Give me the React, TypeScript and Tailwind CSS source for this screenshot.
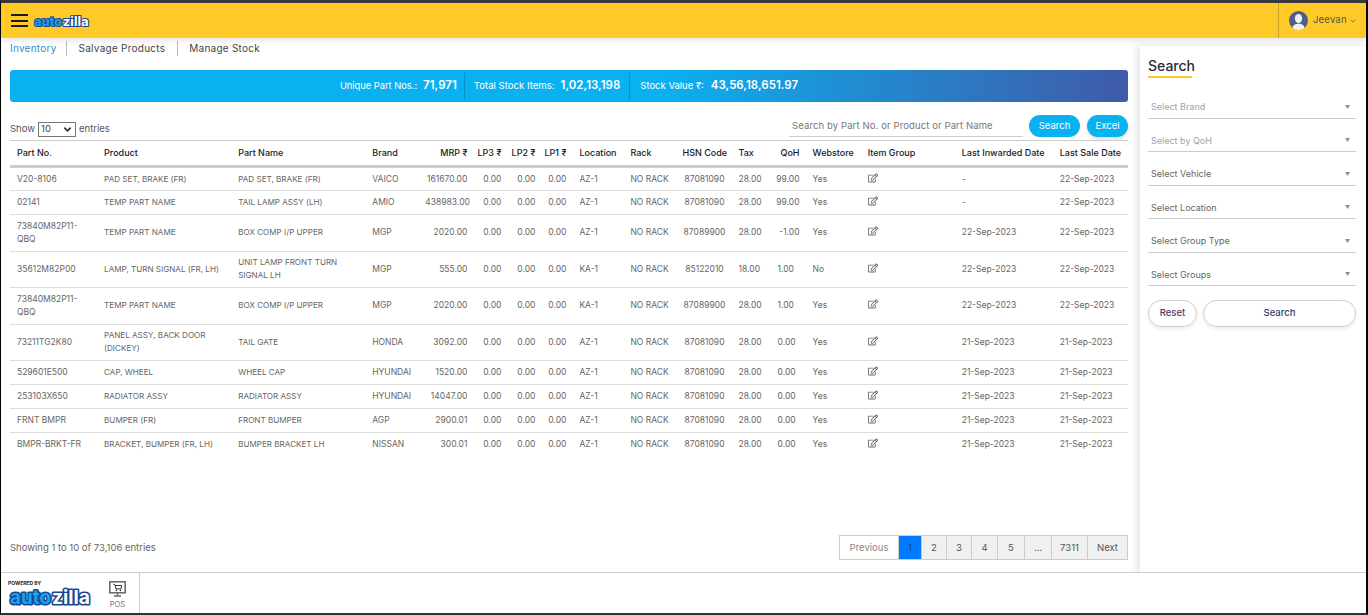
import { ChevronDown } from "lucide-react";
import { FaRegEdit } from "react-icons/fa";

const FONT = "font-['Inter','Liberation_Sans',sans-serif]";

type Col = { label: string; w: number; align?: string };

const COLS: Col[] = [
  { label: "Part No.", w: 87 },
  { label: "Product", w: 134 },
  { label: "Part Name", w: 134 },
  { label: "Brand", w: 60 },
  { label: "MRP ₹", w: 47, align: "pl-0 pr-[5px] text-right" },
  { label: "LP3 ₹", w: 34, align: "pl-0 pr-[5px] text-right" },
  { label: "LP2 ₹", w: 34, align: "pl-0 pr-[5px] text-right" },
  { label: "LP1 ₹", w: 32, align: "pl-0 pr-[6px] text-right" },
  { label: "Location", w: 51 },
  { label: "Rack", w: 52 },
  { label: "HSN Code", w: 56 },
  { label: "Tax", w: 39 },
  { label: "QoH", w: 35, align: "pl-0 pr-[6px] text-right" },
  { label: "Webstore", w: 55 },
  { label: "Item Group", w: 94 },
  { label: "Last Inwarded Date", w: 98 },
  { label: "Last Sale Date", w: 75 },
];

const ROWS = [
  ["V20-8106", "PAD SET, BRAKE (FR)", "PAD SET, BRAKE (FR)", "VAICO", "161670.00", "AZ-1", "87081090", "28.00", "99.00", "Yes", "-", "22-Sep-2023"],
  ["02141", "TEMP PART NAME", "TAIL LAMP ASSY (LH)", "AMIO", "438983.00", "AZ-1", "87081090", "28.00", "99.00", "Yes", "-", "22-Sep-2023"],
  ["73840M82P11-QBQ", "TEMP PART NAME", "BOX COMP I/P UPPER", "MGP", "2020.00", "AZ-1", "87089900", "28.00", "-1.00", "Yes", "22-Sep-2023", "22-Sep-2023"],
  ["35612M82P00", "LAMP, TURN SIGNAL (FR, LH)", "UNIT LAMP FRONT TURN SIGNAL LH", "MGP", "555.00", "KA-1", "85122010", "18.00", "1.00", "No", "22-Sep-2023", "22-Sep-2023"],
  ["73840M82P11-QBQ", "TEMP PART NAME", "BOX COMP I/P UPPER", "MGP", "2020.00", "KA-1", "87089900", "28.00", "1.00", "Yes", "22-Sep-2023", "22-Sep-2023"],
  ["73211TG2K80", "PANEL ASSY, BACK DOOR (DICKEY)", "TAIL GATE", "HONDA", "3092.00", "AZ-1", "87081090", "28.00", "0.00", "Yes", "21-Sep-2023", "21-Sep-2023"],
  ["529601E500", "CAP, WHEEL", "WHEEL CAP", "HYUNDAI", "1520.00", "AZ-1", "87081090", "28.00", "0.00", "Yes", "21-Sep-2023", "21-Sep-2023"],
  ["253103X650", "RADIATOR ASSY", "RADIATOR ASSY", "HYUNDAI", "14047.00", "AZ-1", "87081090", "28.00", "0.00", "Yes", "21-Sep-2023", "21-Sep-2023"],
  ["FRNT BMPR", "BUMPER (FR)", "FRONT BUMPER", "AGP", "2900.01", "AZ-1", "87081090", "28.00", "0.00", "Yes", "21-Sep-2023", "21-Sep-2023"],
  ["BMPR-BRKT-FR", "BRACKET, BUMPER (FR, LH)", "BUMPER BRACKET LH", "NISSAN", "300.01", "AZ-1", "87081090", "28.00", "0.00", "Yes", "21-Sep-2023", "21-Sep-2023"],
];

const FILTERS = [
  { label: "Select Brand", tone: "text-[#a3a3a3]" },
  { label: "Select by QoH", tone: "text-[#a3a3a3]" },
  { label: "Select Vehicle", tone: "text-[#666]" },
  { label: "Select Location", tone: "text-[#666]" },
  { label: "Select Group Type", tone: "text-[#666]" },
  { label: "Select Groups", tone: "text-[#666]" },
];

const PAGES = [
  { label: "Previous", w: "w-[58px]", cls: "bg-white text-[#888]" },
  { label: "1", w: "w-[23px]", cls: "bg-[#007bff] text-[#0b4f9c]" },
  { label: "2", w: "w-[25px]", cls: "bg-[#f0f0f0] text-[#555]" },
  { label: "3", w: "w-[25px]", cls: "bg-[#f0f0f0] text-[#555]" },
  { label: "4", w: "w-[26px]", cls: "bg-[#f0f0f0] text-[#555]" },
  { label: "5", w: "w-[27px]", cls: "bg-[#f0f0f0] text-[#555]" },
  { label: "...", w: "w-[27px]", cls: "bg-[#f0f0f0] text-[#555]" },
  { label: "7311", w: "w-[36px]", cls: "bg-[#f0f0f0] text-[#555]" },
  { label: "Next", w: "w-[40px]", cls: "bg-[#f0f0f0] text-[#555]" },
];

function Logo({ width, height }: { width: number; height: number }) {
  const shared = {
    y: 17.5,
    fontFamily: "Inter, sans-serif",
    fontWeight: 700,
    fontSize: 19,
    lengthAdjust: "spacingAndGlyphs" as const,
    stroke: "#1a4590",
    strokeWidth: 3.2,
    strokeLinejoin: "round" as const,
    style: { paintOrder: "stroke" },
  };
  return (
    <svg width={width} height={height} viewBox="0 0 84 22">
      <text {...shared} x="2" textLength="41" fill="#14a5ea">auto</text>
      <text {...shared} x="44" textLength="38" fill="#ffffff">zilla</text>
    </svg>
  );
}

function Avatar() {
  return (
    <svg width="19" height="19" viewBox="0 0 19 19">
      <circle cx="9.5" cy="9.5" r="9.5" fill="#4d5f86" />
      <ellipse cx="9.5" cy="7.6" rx="3.6" ry="4.6" fill="#f2f2f2" />
      <path d="M3.4 17c.6-3.2 3.2-4.2 6.1-4.2s5.5 1 6.1 4.2A9.5 9.5 0 0 1 9.5 19a9.5 9.5 0 0 1-6.1-2z" fill="#f2f2f2" />
    </svg>
  );
}

function PosIcon() {
  return (
    <svg width="17" height="16" viewBox="0 0 17 16" fill="none">
      <rect x="0.8" y="0.8" width="15.4" height="11" stroke="#666" strokeWidth="1.5" />
      <path d="M4.5 3.3h1.3l1.100 4.600h5l.9-3.400H6.200" stroke="#333" strokeWidth="1" />
      <circle cx="7.4" cy="9.4" r=".8" fill="#333" />
      <circle cx="11.5" cy="9.4" r=".8" fill="#333" />
      <path d="M8.5 12v2M5 15h7" stroke="#666" strokeWidth="1.5" />
    </svg>
  );
}

function Header() {
  return (
    <header className="h-[35px] shrink-0 bg-[#ffca28] flex items-center justify-between shadow-[0_2px_6px_rgba(0,0,0,0.12)] relative z-10">
      <div className="flex items-center pl-[10px]">
        <div className="w-[17px] flex flex-col gap-[3.5px]">
          <span className="h-[2px] bg-[#1c1c1c]" />
          <span className="h-[2px] bg-[#1c1c1c]" />
          <span className="h-[2px] bg-[#1c1c1c]" />
        </div>
        <div className="ml-[5px] mt-[1px]">
          <Logo width={57} height={15} />
        </div>
      </div>
      <div className="h-full w-[88px] border-l border-[#c9a227] flex items-center pl-[10px] gap-[5px]">
        <Avatar />
        <span className="text-[9.5px] tracking-[0.02em] text-[#555]">Jeevan</span>
        <ChevronDown className="w-[8px] h-[8px] -ml-[3px] text-[#555]" />
      </div>
    </header>
  );
}

function Tabs() {
  return (
    <nav className="flex items-center h-[14px] text-[10px] text-[#444] tracking-[0.025em]">
      <span className="text-[#2f8fc4] pr-[9px] border-r border-[#bbb]">Inventory</span>
      <span className="px-[12px] border-r border-[#bbb]">Salvage Products</span>
      <span className="pl-[11px]">Manage Stock</span>
    </nav>
  );
}

function Stats() {
  return (
    <div className="mt-[15px] h-[32px] rounded-[3px] bg-[linear-gradient(90deg,#0ab1f0_0%,#0ab1f0_58%,#3f5aa8_100%)] flex items-center justify-center text-white">
      <div className="flex items-center h-[27px] pr-[7px] border-r border-[#0a8fc4] gap-[6px]">
        <span className="text-[9.3px]">Unique Part Nos.:</span>
        <span className="text-[11.5px] font-semibold">71,971</span>
      </div>
      <div className="flex items-center h-[27px] px-[9px] border-r border-[#0a8fc4] gap-[6px]">
        <span className="text-[9.6px]">Total Stock Items:</span>
        <span className="text-[11.5px] font-semibold">1,02,13,198</span>
      </div>
      <div className="flex items-center h-[27px] pl-[10px] gap-[7px]">
        <span className="text-[9.5px]">Stock Value ₹:</span>
        <span className="text-[11.5px] font-semibold">43,56,18,651.97</span>
      </div>
    </div>
  );
}

function Controls() {
  return (
    <div className="mt-[10px] h-[25px] flex items-end justify-between">
      <div className="flex items-center gap-[3px] text-[9.5px] text-[#555]">
        Show
        <span className="w-[38px] h-[15px] border border-[#767676] flex items-center justify-between px-[2px] text-[#444]">
          10
          <ChevronDown className="w-[11px] h-[11px] text-[#333]" strokeWidth={3.5} />
        </span>
        entries
      </div>
      <div className="flex items-end">
        <div className="w-[234px] h-[21px] border-b border-[#ccc] pl-[3px] text-[9.5px] tracking-[0.012em] text-[#777] flex items-center">
          Search by Part No. or Product or Part Name
        </div>
        <button className="ml-[6px] w-[51px] h-[22px] rounded-full bg-[#0ab1f0] text-white text-[9.5px]">Search</button>
        <button className="ml-[7px] w-[41px] h-[22px] rounded-full bg-[#0ab1f0] text-white text-[9.5px] shadow-[0_2px_4px_rgba(0,0,0,0.15)]">Excel</button>
      </div>
    </div>
  );
}

function Table() {
  return (
    <table className="mt-[3px] w-[1118px] table-fixed border-collapse">
      <colgroup>
        {COLS.map((c) => (
          <col key={c.label} style={{ width: c.w }} />
        ))}
      </colgroup>
      <thead>
        <tr className="h-[26px] border-t border-b-[3px] border-t-[#ccc] border-b-[#ccc]">
          {COLS.map((c) => (
            <th key={c.label} className={`text-[9px] font-medium text-[#1a1a1a] whitespace-nowrap ${c.align ?? "pl-[7px] pr-[5px] text-left"}`}>
              {c.label}
            </th>
          ))}
        </tr>
      </thead>
      <tbody>
        {ROWS.map((r, i) => {
          const [part, product, name, brand, mrp, loc, hsn, tax, qoh, web, inward, sale] = r;
          const tall = part.includes("-QBQ") || product.length > 25 || name.length > 25;
          const td = "pl-[7px] pr-[5px] leading-[13px]";
          const num = "pr-[5px] leading-[13px] text-right whitespace-nowrap";
          return (
            <tr key={i} className={`${tall ? "h-[36.5px]" : "h-[24px]"} ${i < ROWS.length - 1 ? "border-b border-[#ddd]" : ""} text-[8.5px] text-[#666]`}>
              <td className={td}>{part}</td>
              <td className={`${td} text-[8.1px]`}>{product}</td>
              <td className={`${td} text-[8.1px]`}>{name}</td>
              <td className={td}>{brand}</td>
              <td className={num}>{mrp}</td>
              <td className={num}>0.00</td>
              <td className={num}>0.00</td>
              <td className={`${num} pr-[6px]`}>0.00</td>
              <td className={td}>{loc}</td>
              <td className={`${td} whitespace-nowrap`}>NO RACK</td>
              <td className={`${td} text-center`}>{hsn}</td>
              <td className={td}>{tax}</td>
              <td className={qoh.length > 4 ? `${num} pr-[6px]` : td}>{qoh}</td>
              <td className={td}>{web}</td>
              <td className={td}>
                <FaRegEdit className="w-[10px] h-[10px] -mt-[3px] text-[#666]" />
              </td>
              <td className={td}>{inward}</td>
              <td className={`${td} whitespace-nowrap`}>{sale}</td>
            </tr>
          );
        })}
      </tbody>
    </table>
  );
}

function TableFooter() {
  return (
    <div className="mt-auto mb-[12px] flex items-center justify-between">
      <span className="pt-[1px] text-[9.5px] text-[#666]">Showing 1 to 10 of 73,106 entries</span>
      <div className="flex h-[25px] border border-[#ccc] text-[9.5px]">
        {PAGES.map((p, i) => (
          <span key={p.label} className={`${p.w} ${p.cls} ${i > 0 ? "border-l border-[#ccc]" : ""} pt-[1px] flex items-center justify-center`}>
            {p.label}
          </span>
        ))}
      </div>
    </div>
  );
}

function Sidebar() {
  return (
    <aside className="w-[226px] shrink-0 mt-[8px] bg-white shadow-[-3px_0_8px_rgba(0,0,0,0.12)] px-[8px] pr-[10px] pt-[11px]">
      <h2 className="text-[14px] leading-[17px] font-medium text-[#2a2a3a]">Search</h2>
      <div className="w-[44px] h-[2px] bg-[#ffca28] mt-[2px]" />
      <div className="mt-[7px] flex flex-col">
        {FILTERS.map((f) => (
          <div key={f.label} className={`h-[33.5px] border-b border-[#ccc] flex items-end justify-between pl-[3px] pr-[6px] pb-[4px] text-[9px] ${f.tone}`}>
            {f.label}
            <span className="mb-[2px] text-[5px] leading-[10px] text-[#888]">▼</span>
          </div>
        ))}
      </div>
      <div className="mt-[14px] flex gap-[6px]">
        <button className="w-[49px] h-[27px] rounded-full border border-[#ccc] text-[9.5px] font-medium text-[#4a3a6a] shadow-[0_2px_4px_rgba(0,0,0,0.08)]">Reset</button>
        <button className="w-[153px] h-[27px] rounded-full border border-[#ccc] text-[9.5px] font-medium text-[#3a3a6a] shadow-[0_2px_4px_rgba(0,0,0,0.08)]">Search</button>
      </div>
    </aside>
  );
}

function Footer() {
  return (
    <footer className="h-[41px] shrink-0 border-t border-[#ccc] flex bg-white">
      <div className="w-[139px] border-r border-[#ccc] flex">
        <div className="pl-[7px] pt-[7px] w-[101px]">
          <div className="text-[5px] leading-[6px] font-bold text-[#222]">POWERED BY</div>
          <Logo width={84} height={22} />
        </div>
        <div className="flex flex-col items-center pt-[8px] pl-[7px]">
          <PosIcon />
          <span className="text-[7.5px] leading-[10px] mt-[3px] text-[#777]">POS</span>
        </div>
      </div>
    </footer>
  );
}

export default function App() {
  return (
    <div className={`${FONT} w-[1368px] h-[615px] overflow-hidden flex flex-col bg-white border-t-[3px] border-t-[#3b373d] border-l border-l-black border-r-2 border-r-black border-b-2 border-b-[#1f3a3a]`}>
      <Header />
      <div className="flex-1 min-h-0 flex">
        <main className="w-[1139px] pl-[9px] pr-[12px] pt-[3px] flex flex-col">
          <Tabs />
          <Stats />
          <Controls />
          <Table />
          <TableFooter />
        </main>
        <Sidebar />
      </div>
      <Footer />
    </div>
  );
}
